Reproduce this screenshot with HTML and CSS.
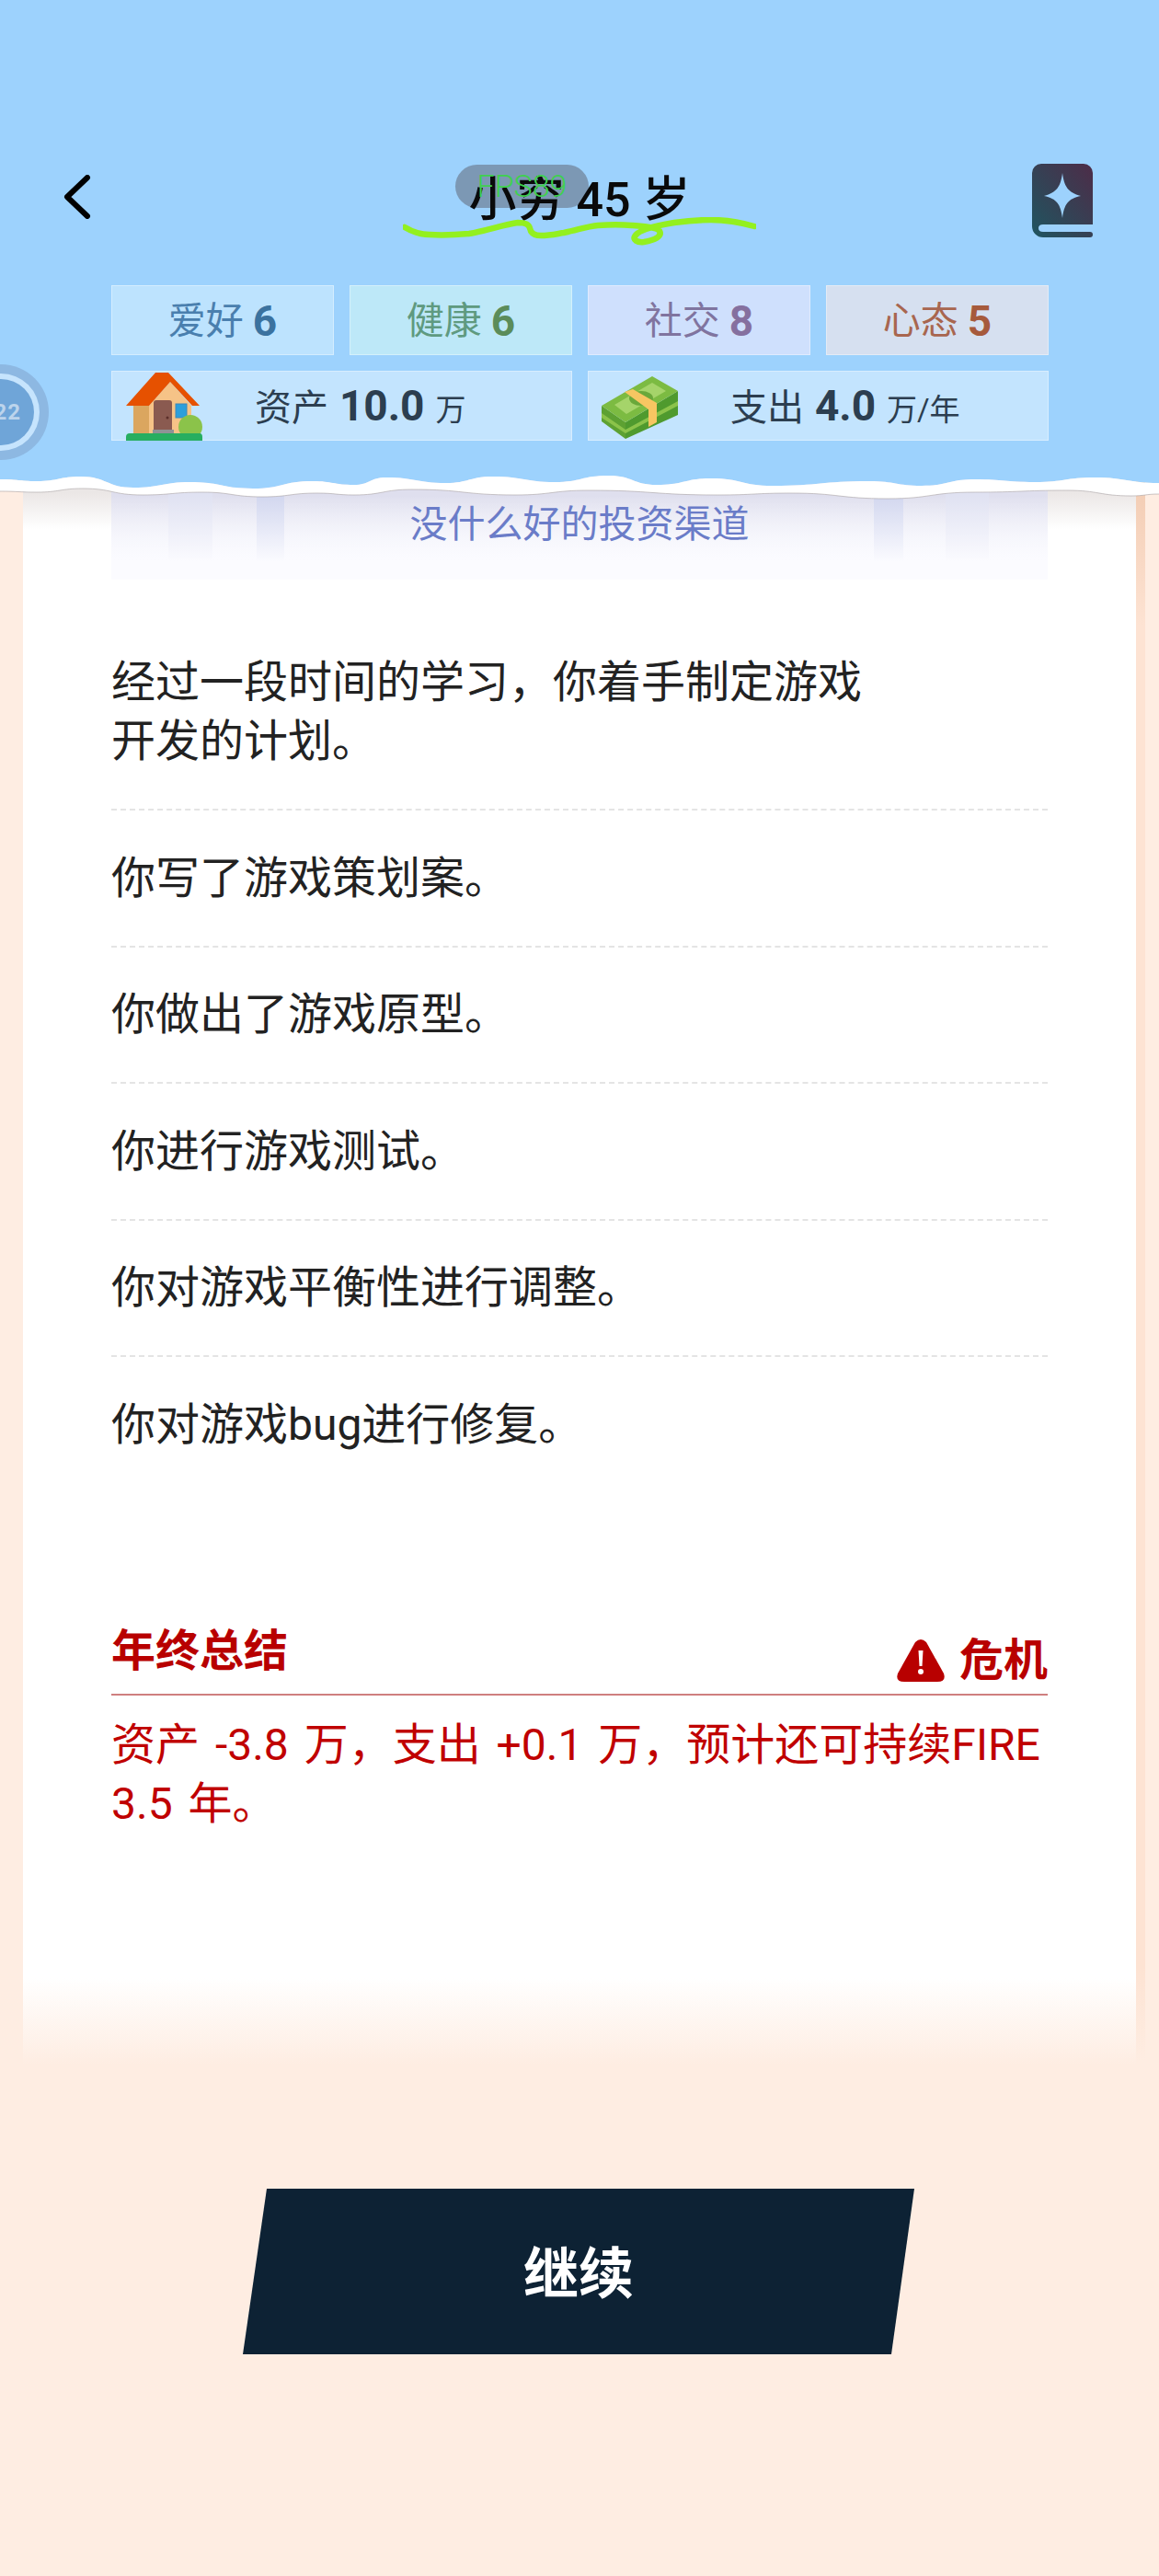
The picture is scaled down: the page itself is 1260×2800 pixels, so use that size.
FILE: index.html
```html
<!DOCTYPE html>
<html lang="zh-CN">
<head>
    <meta charset="UTF-8">
    <title>小穷 45 岁</title>
    <link rel="stylesheet" href="styles.css">
</head>
<body>
    <header class="top">
        <div class="nav">
            <svg class="back" viewBox="0 0 32 48"><path d="M27 3 L5 24 L27 45" fill="none" stroke="#000" stroke-width="6" stroke-linecap="round" stroke-linejoin="round"/></svg>
            <div class="fps-pill"></div>
            <div class="title">小穷 45 岁</div>
            <div class="fps">FPS89</div>
            <svg class="book" viewBox="0 0 66 80">
                <defs>
                    <linearGradient id="bookFill" x1="0" y1="1" x2="1" y2="0">
                        <stop offset="0" stop-color="#1f5560"/>
                        <stop offset="1" stop-color="#4d2c48"/>
                    </linearGradient>
                </defs>
                <path d="M10 0 H56 A10 10 0 0 1 66 10 V66 H12 Q7 66 7 70 Q7 74 12 74 H63 A3 3 0 0 1 63 80 H12 A12 12 0 0 1 0 68 V10 A10 10 0 0 1 10 0 Z" fill="url(#bookFill)"/>
                <path d="M33 10 C35 25 39 31 53 35 C39 38 35 44 33 59 C31 44 27 38 13 35 C27 31 31 25 33 10 Z" fill="#9dd2fd"/>
            </svg>
            <svg class="squiggle" viewBox="0 0 384 48"><path d="M2 11 C12 17 20 19 29 19 C45 20 60 19 72 18 C90 15 110 8 125 6 C134 6 137 8 138 12 C139 18 144 20 150 20 C160 20 168 18 175 17 C190 14 200 10 212 9 C225 8 238 8 249 9 C262 10 276 11 279 15 C282 21 274 25 262 27 C254 28 250 24 252 21 C255 15 270 10 295 6 C310 4 322 3 335 3 C352 3 368 6 382 10" fill="none" stroke="#93f01f" stroke-width="6.500" stroke-linecap="round"/></svg>
        </div>
        <div class="stats">
            <div class="stat hobby">爱好 <b>6</b></div>
            <div class="stat health">健康 <b>6</b></div>
            <div class="stat social">社交 <b>8</b></div>
            <div class="stat mood">心态 <b>5</b></div>
            <div class="money-row asset">
                <svg class="pic" viewBox="0 0 84 75">
                    <path d="M8 37 H26 V67 H8 Z" fill="#dba65f"/>
                    <path d="M25 37 L48 11 L71 37 V67 H25 Z" fill="#f6c387"/>
                    <path d="M0 37 L32 1 H46 L80 37 H72 L48 11 L25 37 Z" fill="#e65100"/>
                    <path d="M30 34 Q30 31 33 31 H47 Q50 31 50 34 V66 H30 Z" fill="#8a5a50"/>
                    <circle cx="45" cy="50" r="1.500" fill="#5b2f2a"/>
                    <rect x="54" y="35" width="12" height="15" fill="#2d9fdc" stroke="#3f88b8"/>
                    <circle cx="70" cy="60" r="13" fill="#8bc34a"/>
                    <path d="M29 63 H52 V68 H29 Z" fill="#8f9295"/>
                    <path d="M4 67 H80 Q83 67 83 71 V75 H0 V71 Q0 67 4 67 Z" fill="#27ae60"/>
                </svg>
                <span class="money-text">资产 <b>10.0</b> <small>万</small></span>
            </div>
            <div class="money-row spend">
                <svg class="pic" viewBox="0 0 84 69">
                    <path d="M0 32 L26 50 L26 68 L0 49 Z" fill="#5da132"/>
                    <path d="M26 50 L83 16 V42 L26 68 Z" fill="#4f9a2e"/>
                    <path d="M0 40 L26 58 L83 27 V32 L26 62 L0 45 Z" fill="#8bc34a"/>
                    <path d="M0 32 L55 0 L83 16 L26 50 Z" fill="#7cbb42"/>
                    <path d="M14 31 L55 7 L70 16 L27 41 Z" fill="#a5d46a"/>
                    <ellipse cx="43" cy="24" rx="13" ry="8" fill="#6aa83a"/>
                    <path d="M25 17 L34 14 L60 29 V50 L51 55 V36 Z" fill="#f7c662"/>
                </svg>
                <span class="money-text">支出 <b>4.0</b> <small>万/年</small></span>
            </div>
        </div>
        <div class="badge"><span>22</span></div>
        <svg class="wave" viewBox="0 0 1260 60">
            <path d="M0 21 C20 21 20 23 40 23 C64 23 64 18 88 18 C116 18 116 30 145 30 C176 30 176 24 207 24 C241 24 241 31 275 31 C307 31 307 23 340 23 C362 23 362 27 385 27 C402 27 402 19 420 19 C452 19 452 25 485 25 C510 25 510 18 536 18 C570 18 570 24 603 24 C632 24 632 17 662 17 C688 17 688 27 714 27 C744 27 744 20 773 20 C806 20 806 28 840 28 C892 28 892 23 945 23 C974 23 974 28 1002 28 C1031 28 1031 21 1060 21 C1092 21 1092 24 1125 24 C1158 24 1158 19 1190 19 C1225 19 1225 25 1260 25 V0 H0 Z" fill="#9dd2fd"/>
            <path d="M0 21 C20 21 20 23 40 23 C64 23 64 18 88 18 C116 18 116 30 145 30 C176 30 176 24 207 24 C241 24 241 31 275 31 C307 31 307 23 340 23 C362 23 362 27 385 27 C402 27 402 19 420 19 C452 19 452 25 485 25 C510 25 510 18 536 18 C570 18 570 24 603 24 C632 24 632 17 662 17 C688 17 688 27 714 27 C744 27 744 20 773 20 C806 20 806 28 840 28 C892 28 892 23 945 23 C974 23 974 28 1002 28 C1031 28 1031 21 1060 21 C1092 21 1092 24 1125 24 C1158 24 1158 19 1190 19 C1225 19 1225 25 1260 25 V37 C1245 37 1245 39 1230 39 C1195 39 1195 33 1160 33 C1110 33 1110 35 1060 35 C1012 35 1012 42 965 42 C912 42 912 36 860 36 C820 36 820 38 780 38 C710 38 710 33 640 33 C600 33 600 38 560 38 C504 38 504 32 448 32 C416 32 416 38 385 38 C365 38 365 36 345 36 C315 36 315 40 285 40 C252 40 252 35 220 35 C187 35 187 38 155 38 C122 38 122 31 90 31 C65 31 65 35 40 35 C20 35 20 34 0 34 Z" fill="#fff"/>
            <path d="M1260 37 C1245 37 1245 39 1230 39 C1195 39 1195 33 1160 33 C1110 33 1110 35 1060 35 C1012 35 1012 42 965 42 C912 42 912 36 860 36 C820 36 820 38 780 38 C710 38 710 33 640 33 C600 33 600 38 560 38 C504 38 504 32 448 32 C416 32 416 38 385 38 C365 38 365 36 345 36 C315 36 315 40 285 40 C252 40 252 35 220 35 C187 35 187 38 155 38 C122 38 122 31 90 31 C65 31 65 35 40 35 C20 35 20 34 0 34" fill="none" stroke="#a8a2a4" stroke-opacity="0.6"/>
        </svg>
    </header>

    <div class="sheet">
        <main class="card">
            <div class="banner">没什么好的投资渠道</div>
            <ul class="events">
                <li>经过一段时间的学习，你着手制定游戏开发的计划。</li>
                <li>你写了游戏策划案。</li>
                <li>你做出了游戏原型。</li>
                <li>你进行游戏测试。</li>
                <li>你对游戏平衡性进行调整。</li>
                <li>你对游戏bug进行修复。</li>
            </ul>
            <section class="summary">
                <div class="summary-head">
                    <h3>年终总结</h3>
                    <div class="danger">
                        <svg viewBox="0 0 52 48"><path d="M20 4 Q26 -2 32 4 L51 38 Q54 47 44 47 H8 Q-2 47 1 38 Z" fill="#b80000"/><path d="M23.500 13 H28.500 L27.500 30 H24.500 Z M26 33 A3 3 0 1 1 26 39 A3 3 0 1 1 26 33 Z" fill="#fff"/></svg>
                        危机
                    </div>
                </div>
                <p>资产 -3.8 万，支出 +0.1 万，预计还可持续FIRE 3.5 年。</p>
            </section>
        </main>
    </div>

    <button class="next">继续</button>
</body>
</html>
```

FILE: styles.css
```css
* {
    box-sizing: border-box;
}
body {
    margin: 0;
    width: 1260px;
    height: 2800px;
    overflow: hidden;
    background-color: #feede2;
    font-family: Roboto, "Noto Sans CJK SC", sans-serif;
    color: #222;
}

/* 顶部 */
.top {
    position: relative;
    z-index: 2;
    height: 500px;
    padding-top: 178px;
    background-color: #9dd2fd;
}
.nav {
    position: relative;
    display: flex;
    justify-content: space-between;
    align-items: center;
    height: 80px;
    padding: 0 72px 0 68px;
}
.back {
    width: 32px;
    height: 48px;
    margin-top: -8px;
}
.title {
    position: absolute;
    left: 0;
    right: 0;
    top: 10px;
    text-align: center;
    font-size: 52px;
    line-height: 60px;
    font-weight: 500;
    color: #0a0a0a;
}
.book {
    width: 66px;
    height: 80px;
}
.fps-pill {
    position: absolute;
    left: 495px;
    top: 1px;
    width: 145px;
    height: 47px;
    border-radius: 24px;
    background-color: #7c98b4;
}
.fps {
    position: absolute;
    left: 495px;
    top: 1px;
    width: 145px;
    color: #3fd04f;
    font-size: 34px;
    line-height: 47px;
    text-align: center;
    font-weight: 300;
}
.squiggle {
    position: absolute;
    left: 438px;
    top: 58px;
    width: 384px;
    height: 48px;
}
.stats {
    display: grid;
    grid-template-columns: repeat(4, 242px);
    grid-auto-rows: 76px;
    gap: 17px;
    margin: 52px 0 0 121px;
}
.stat {
    display: flex;
    justify-content: center;
    align-items: center;
    gap: 10px;
    padding-top: 2px;
    border: 1px solid rgba(255, 255, 255, 0.35);
    font-size: 41px;
    line-height: 60px;
}
.stat b {
    font-size: 46px;
    font-weight: 700;
}
.hobby { background-color: #bde3fe; color: #4a7fae; }
.hobby b { color: #3b729f; }
.health { background-color: #bde8f8; color: #5f9a80; }
.health b { color: #5b8c5a; }
.social { background-color: #cfe0fd; color: #80749f; }
.social b { color: #85709f; }
.mood { background-color: #d6e0f0; color: #a8664f; }
.mood b { color: #a65a3c; }
.money-row {
    grid-column: span 2;
    display: flex;
    align-items: center;
    border: 1px solid rgba(255, 255, 255, 0.35);
    background-color: #c3e4fe;
    color: #2c3e50;
}
.pic {
    flex: none;
}
.asset .pic {
    width: 84px;
    height: 75px;
    margin-left: 15px;
}
.spend .pic {
    width: 84px;
    height: 69px;
    margin: 5px 0 0 14px;
}
.money-text {
    padding-top: 4px;
    font-size: 40px;
    line-height: 60px;
    margin-left: 56px;
    word-spacing: 2px;
}
.money-text b {
    font-size: 46px;
    font-weight: 700;
}
.money-text small {
    font-size: 33px;
}
.badge {
    position: absolute;
    left: -51px;
    top: 396px;
    display: flex;
    justify-content: flex-end;
    align-items: center;
    width: 104px;
    height: 104px;
    border-radius: 50%;
    background-color: #8db8e2;
}
.badge::before {
    content: "";
    position: absolute;
    left: 10px;
    top: 10px;
    width: 84px;
    height: 84px;
    border-radius: 50%;
    background-color: #c6e4fd;
}
.badge span {
    position: relative;
    width: 72px;
    height: 72px;
    margin-right: 16px;
    border-radius: 50%;
    background-color: #6fa5d8;
    color: #bcd4ec;
    font-size: 24px;
    font-weight: 700;
    letter-spacing: 1px;
    line-height: 72px;
    text-align: right;
    padding-right: 14px;
}
.wave {
    position: absolute;
    left: 0;
    top: 100%;
    width: 1260px;
    height: 60px;
}

/* 内容卡片 */
.sheet {
    width: 1220px;
    height: 1750px;
    margin-left: 25px;
    padding-right: 10px;
    background: linear-gradient(#f3cdb4 30px, #fde3d3 180px, #fde3d3 1640px, rgba(253, 227, 211, 0) 1740px);
}
.card {
    height: 100%;
    padding: 0 96px;
    background: linear-gradient(#ebe7e6 36px, #fff 75px, #fff 1650px, #feede2 1744px);
}
.banner {
    height: 130px;
    padding-top: 40px;
    color: #6a7cc8;
    font-size: 41px;
    line-height: 60px;
    text-align: center;
    background:
        linear-gradient(rgba(251, 251, 255, 0) 30%, #fbfbff 85%),
        linear-gradient(90deg, transparent 62px, #e0e2f2 62px, #e0e2f2 110px, transparent 110px, transparent 158px, #d2d7ef 158px, #d2d7ef 188px, transparent 188px, transparent 829px, #d2d7ef 829px, #d2d7ef 861px, transparent 861px, transparent 907px, #e0e2f2 907px, #e0e2f2 954px, transparent 954px),
        linear-gradient(#dfdfee 30%, #f4f5fc 80%);
}
.events {
    list-style: none;
    margin: 38.500px 0 0;
    padding: 0;
}
.events li {
    padding: 41.500px 180px 41px 0;
    border-bottom: 2px dashed #e4e4e4;
    font-size: 48px;
    line-height: 64px;
    color: #222;
}
.events li:last-child {
    border-bottom: none;
}
.summary {
    margin-top: 141px;
    color: #b80000;
}
.summary-head {
    display: flex;
    justify-content: space-between;
    align-items: flex-end;
    height: 80px;
    padding-bottom: 8px;
    border-bottom: 2px solid #cf7f7f;
}
.summary-head h3 {
    margin: 0 0 10px;
    font-size: 48px;
    line-height: 56px;
    font-weight: 700;
}
.danger {
    display: flex;
    align-items: center;
    gap: 16px;
    font-size: 48px;
    line-height: 56px;
    font-weight: 700;
}
.danger svg {
    width: 52px;
    height: 48px;
}
.summary p {
    margin: 22px 0 0;
    font-size: 48px;
    line-height: 64px;
    word-spacing: 5px;
    color: #c00000;
}

/* 继续按钮 */
.next {
    display: block;
    width: 730px;
    height: 180px;
    margin: 129px 0 0 264px;
    padding: 0 0 5px;
    border: none;
    background-color: #0d2234;
    clip-path: polygon(26px 0, 100% 0, 705px 100%, 0 100%);
    color: #fff;
    font-family: inherit;
    font-size: 60px;
    font-weight: 700;
}
```
